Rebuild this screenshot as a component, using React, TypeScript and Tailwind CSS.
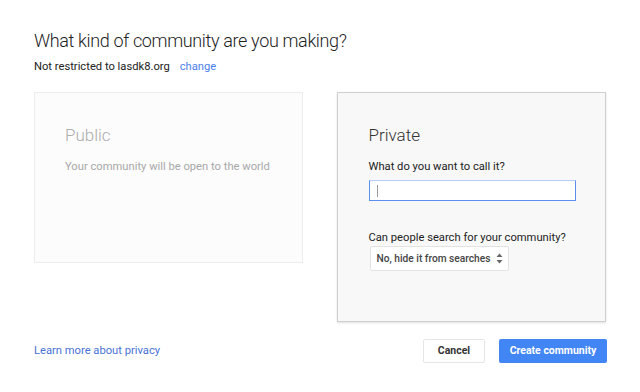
import React from 'react';

export default function App() {
  return (
    <div
      className="w-[640px] h-[392px] bg-white px-[34px] pt-[30px] text-[#222]"
      style={{ fontFamily: 'Roboto, "Liberation Sans", sans-serif' }}
    >
      <h1 className="text-[18px] leading-[22px] font-light tracking-[-0.35px] text-[#222]">
        What kind of community are you making?
      </h1>
      <p className="mt-[8px] text-[11.2px] leading-[14px]">
        Not restricted to lasdk8.org
        <a className="ml-[10px] text-[#4d7fe8] cursor-pointer">change</a>
      </p>

      <div className="mt-[18px] flex items-start gap-[34px]">
        <div className="w-[269px] h-[171px] border border-[#ededed] bg-[#fcfcfc] pl-[30px] pt-[31px]">
          <div className="text-[17px] leading-[22px] font-light text-[#acacac]">Public</div>
          <div className="mt-[14px] text-[11.2px] leading-[14px] text-[#a8a8a8]">
            Your community will be open to the world
          </div>
        </div>

        <div className="w-[270px] h-[230px] border border-[#cfcfcf] bg-[#f8f8f8] pl-[31px] pt-[31px] shadow-[0_1px_2px_rgba(0,0,0,0.12)]">
          <div className="text-[17px] leading-[22px] font-light text-[#333]">Private</div>
          <label className="block mt-[14px] text-[11.2px] leading-[14px] text-[#222]">
            What do you want to call it?
          </label>
          <div className="mt-[6px] w-[207px] h-[21px] bg-white border border-[#5a8ff0] border-t-[#b7cdf7] flex items-center pl-[7px]">
            <span className="w-px h-[12px] bg-[#999]" />
          </div>
          <label className="block mt-[30px] text-[11.2px] leading-[14px] text-[#222]">
            Can people search for your community?
          </label>
          <div className="mt-px ml-px w-[139px] h-[25px] bg-white border border-[#e3e3e3] rounded-[2px] flex items-center justify-between pl-[6px] pr-[5px]">
            <span className="text-[10.2px] font-medium text-[#444] whitespace-nowrap">No, hide it from searches</span>
            <svg width="7" height="11" viewBox="0 0 7 11" className="text-[#666]">
              <path d="M3.5 0.5 L6.5 4 L0.5 4 Z" fill="currentColor" />
              <path d="M3.5 10.5 L6.5 7 L0.5 7 Z" fill="currentColor" />
            </svg>
          </div>
        </div>
      </div>

      <div className="mt-[17px] w-[573px] flex items-center justify-between">
        <a className="text-[11.2px] leading-[14px] text-[#4a73d6] cursor-pointer">Learn more about privacy</a>
        <div className="flex gap-[14px]">
          <button className="w-[62px] h-[24px] border border-[#e6e6e6] rounded-[2px] bg-white text-[10.5px] font-bold text-[#333]">
            Cancel
          </button>
          <button className="w-[108px] h-[24px] rounded-[2px] bg-[#4285f4] text-[10.5px] font-bold text-white">
            Create community
          </button>
        </div>
      </div>
    </div>
  );
}
